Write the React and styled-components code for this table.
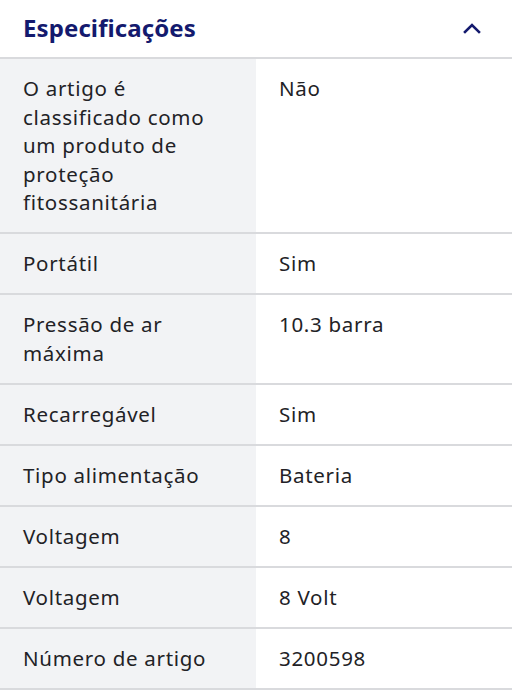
import styled, { createGlobalStyle } from 'styled-components';

const GlobalStyle = createGlobalStyle`
    body {
        margin: 0;
        background: #ffffff;
        font-family: "Noto Sans", "Open Sans", sans-serif;
    }
`;

const specs = [
    ['O artigo é classificado como um produto de proteção fitossanitária', 'Não'],
    ['Portátil', 'Sim'],
    ['Pressão de ar máxima', '10.3 barra'],
    ['Recarregável', 'Sim'],
    ['Tipo alimentação', 'Bateria'],
    ['Voltagem', '8'],
    ['Voltagem', '8 Volt'],
    ['Número de artigo', '3200598'],
];

const Panel = styled.section`
    width: 512px;
    background: #ffffff;
`;

const Header = styled.div`
    display: flex;
    align-items: center;
    justify-content: space-between;
    height: 59px;
    padding: 0 30px 2px 23px;
    box-sizing: border-box;
    border-bottom: 2px solid #d9dadd;
`;

const Title = styled.h2`
    margin: 0;
    font-size: 24px;
    font-weight: 700;
    color: #141a6e;
    letter-spacing: 0.1px;
`;

const Table = styled.div`
    display: grid;
    grid-template-columns: 256px 256px;
`;

const Cell = styled.div`
    padding: 15px 23px 15.5px;
    font-size: 20.5px;
    letter-spacing: 0.7px;
    line-height: 28.5px;
    color: #222226;
    background: ${props => (props.$label ? '#f2f3f5' : '#ffffff')};
    border-bottom: 2px solid #d9dadd;
`;

const Chevron = () => (
    <svg width="20" height="14" viewBox="0 0 20 14" fill="none">
        <path d="M3 11 L10 4 L17 11" stroke="#141a6e" strokeWidth="2.6" strokeLinecap="square" />
    </svg>
);

const App = () => (
    <Panel>
        <GlobalStyle />
        <Header>
            <Title>Especificações</Title>
            <Chevron />
        </Header>
        <Table>
            {specs.map(([label, value], i) => [
                <Cell key={'l' + i} $label>{label}</Cell>,
                <Cell key={'v' + i}>{value}</Cell>,
            ])}
        </Table>
    </Panel>
);

export default App;
